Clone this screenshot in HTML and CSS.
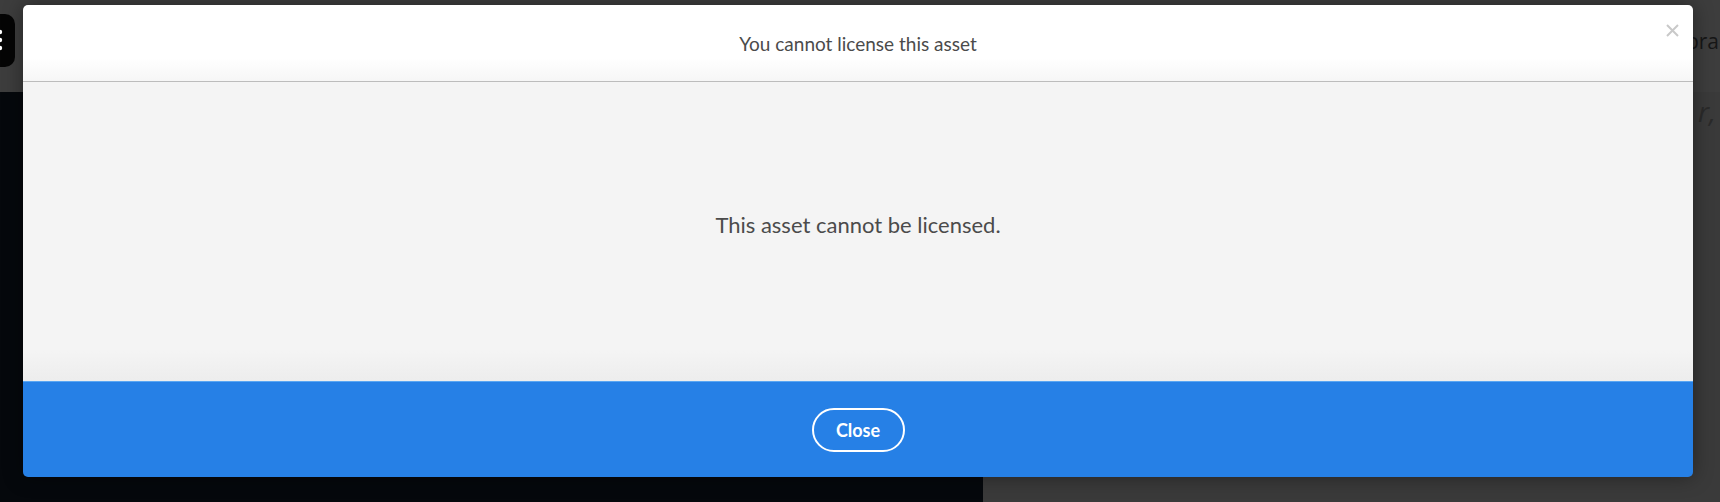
FILE: index.html
```html
<!DOCTYPE html>
<html lang="en">
<head>
    <meta charset="UTF-8">
    <meta name="viewport" content="width=device-width, initial-scale=1.0">
    <title>You cannot license this asset</title>
    <link rel="stylesheet" href="styles.css">
</head>
<body>
    <!-- page behind the dialog -->
    <div class="page">
        <div class="topbar">
            <div class="app-button">
                <svg width="6" height="24" viewBox="0 0 6 24">
                    <circle cx="3" cy="4" r="2.2" fill="#fff"/>
                    <circle cx="3" cy="12" r="2.2" fill="#fff"/>
                    <circle cx="3" cy="20" r="2.2" fill="#fff"/>
                </svg>
            </div>
            <div class="topbar-title">bra</div>
        </div>
        <div class="main">
            <div class="preview"></div>
            <div class="side">
                <div class="side-text">r,</div>
            </div>
        </div>
    </div>

    <div class="modal">
        <div class="modal-header">
            <h2>You cannot license this asset</h2>
            <button class="modal-x" aria-label="Close">
                <svg width="13" height="13" viewBox="0 0 13 13">
                    <path d="M1 1 L12 12 M12 1 L1 12" stroke="#c9c9c9" stroke-width="2" fill="none"/>
                </svg>
            </button>
        </div>
        <div class="modal-body">
            <p>This asset cannot be licensed.</p>
        </div>
        <div class="modal-footer">
            <button class="btn-close">Close</button>
        </div>
    </div>
</body>
</html>
```

FILE: styles.css
```css
body {
    margin: 0;
    width: 1720px;
    height: 502px;
    overflow: hidden;
    background: #3a3a3a;
    font-family: 'Lato', 'Open Sans', sans-serif;
}
.page {
    display: flex;
    flex-direction: column;
    height: 100%;
}
.topbar {
    height: 92px;
    background: #3d3d3d;
    display: flex;
    align-items: center;
    justify-content: space-between;
}
.app-button {
    width: 15px;
    height: 53px;
    margin-top: -12px;
    background: #050505;
    border-radius: 0 10px 10px 0;
    display: flex;
    align-items: center;
    justify-content: flex-start;
    overflow: hidden;
}
.app-button svg {
    margin-left: -3px;
}
.topbar-title {
    font-size: 21px;
    color: #161616;
    margin-right: 1px;
    margin-top: -11px;
    font-family: 'Open Sans', sans-serif;
}
.main {
    flex: 1;
    display: flex;
}
.preview {
    width: 983px;
    background: #05080c;
}
.side {
    flex: 1;
    background: #3a3a3a;
    display: flex;
    justify-content: flex-end;
}
.side-text {
    font-size: 28px;
    font-style: italic;
    color: #2a2a2a;
    margin-top: 0;
    margin-right: 4px;
    font-family: 'Open Sans', sans-serif;
}

/* dialog */
.modal {
    position: fixed;
    left: 23px;
    top: 5px;
    width: 1670px;
    height: 472px;
    display: flex;
    flex-direction: column;
    border-radius: 5px;
    overflow: hidden;
    box-shadow: 0 0 20px rgba(0, 0, 0, 0.4);
}
.modal-header {
    height: 76px;
    background: linear-gradient(to bottom, #ffffff 70%, #f6f6f6);
    border-bottom: 1px solid #bcbcbc;
    display: flex;
    align-items: center;
    justify-content: center;
    position: relative;
}
.modal-header h2 {
    margin: 0;
    font-size: 19px;
    font-weight: normal;
    color: #4b4b4b;
}
.modal-x {
    position: absolute;
    right: 14px;
    top: 19px;
    background: none;
    border: none;
    padding: 0;
    cursor: pointer;
}
.modal-body {
    height: 299px;
    background: linear-gradient(to bottom, #f4f4f4 90%, #ededed);
    display: flex;
    align-items: center;
    justify-content: center;
}
.modal-body p {
    margin: 0 0 14px;
    font-size: 22px;
    color: #4b4b4b;
}
.modal-footer {
    flex: 1;
    background: #2680e6;
    border-top: 1px solid #5aa6f2;
    display: flex;
    align-items: center;
    justify-content: center;
}
.btn-close {
    width: 93px;
    height: 44px;
    border: 2px solid #fff;
    border-radius: 22px;
    background: transparent;
    color: #fff;
    font-family: 'Lato', 'Open Sans', sans-serif;
    font-size: 18px;
    font-weight: bold;
    cursor: pointer;
}
```
